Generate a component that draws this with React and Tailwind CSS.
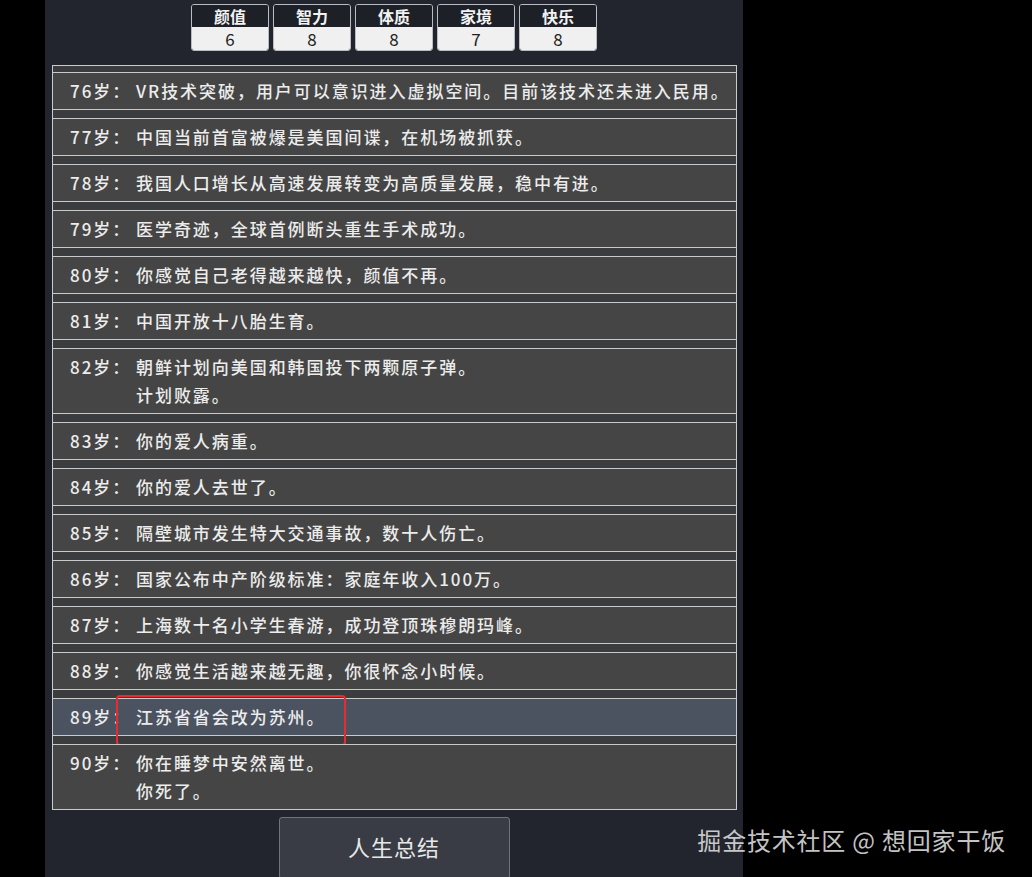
import React from 'react';

const stats = [
  { label: '颜值', value: 6 },
  { label: '智力', value: 8 },
  { label: '体质', value: 8 },
  { label: '家境', value: 7 },
  { label: '快乐', value: 8 },
];

const events = [
  { age: 76, lines: ['VR技术突破，用户可以意识进入虚拟空间。目前该技术还未进入民用。'] },
  { age: 77, lines: ['中国当前首富被爆是美国间谍，在机场被抓获。'] },
  { age: 78, lines: ['我国人口增长从高速发展转变为高质量发展，稳中有进。'] },
  { age: 79, lines: ['医学奇迹，全球首例断头重生手术成功。'] },
  { age: 80, lines: ['你感觉自己老得越来越快，颜值不再。'] },
  { age: 81, lines: ['中国开放十八胎生育。'] },
  { age: 82, lines: ['朝鲜计划向美国和韩国投下两颗原子弹。', '计划败露。'] },
  { age: 83, lines: ['你的爱人病重。'] },
  { age: 84, lines: ['你的爱人去世了。'] },
  { age: 85, lines: ['隔壁城市发生特大交通事故，数十人伤亡。'] },
  { age: 86, lines: ['国家公布中产阶级标准：家庭年收入100万。'] },
  { age: 87, lines: ['上海数十名小学生春游，成功登顶珠穆朗玛峰。'] },
  { age: 88, lines: ['你感觉生活越来越无趣，你很怀念小时候。'] },
  { age: 89, lines: ['江苏省省会改为苏州。'], marked: true },
  { age: 90, lines: ['你在睡梦中安然离世。', '你死了。'] },
];

function StatBox({ label, value }) {
  return (
    <div className="w-[78px] h-[47px] flex flex-col border border-[#b9bcc2] rounded-[3px] overflow-hidden">
      <div className="h-[22px] bg-[#1d2027] text-[#f2f2f2] text-[16px] font-semibold leading-[22px] text-center">
        {label}
      </div>
      <div className="h-[23px] bg-[#f0f0f0] text-[#222] text-[17px] leading-[23px] text-center">
        {value}
      </div>
    </div>
  );
}

function EventRow({ age, lines, marked }) {
  return (
    <li
      className={
        'relative flex border-y border-[#c9cacc] pl-[17px] py-[4px] ' +
        (marked ? 'bg-[#4b5361]' : 'bg-[#454545]')
      }
    >
      <div className="w-[66px] shrink-0 leading-[28px]">{age}岁：</div>
      <div className="flex flex-col">
        {lines.map((l, i) => (
          <div key={i} className="leading-[28px]">
            {l}
          </div>
        ))}
      </div>
      {marked && (
        <div className="absolute left-[63px] top-[-4px] w-[230px] h-[51px] border-[2.5px] border-[#ea2a2e] rounded-[4px]" />
      )}
    </li>
  );
}

export default function App() {
  return (
    <div className="relative w-full h-[877px] bg-black flex overflow-hidden font-['Noto_Sans_CJK_SC','Noto_Sans',sans-serif]">
      <div className="ml-[45px] w-[698px] h-full bg-[#22252d] flex flex-col items-center pt-[4px]">
        <div className="flex gap-[4px]">
          {stats.map((s) => (
            <StatBox key={s.label} {...s} />
          ))}
        </div>

        <ul className="mt-[14px] w-[685px] ml-[1px] h-[745px] shrink-0 overflow-hidden border border-[#c9cacc] bg-[#3b3c3e] pt-[6px] flex flex-col gap-[8px] text-[17px] tracking-[1.95px] text-[#ececec] font-medium">
          {events.map((e) => (
            <EventRow key={e.age} {...e} />
          ))}
        </ul>

        <button className="mt-[7px] w-[231px] h-[62px] shrink-0 bg-[#393c44] border border-[#70737a] rounded-[3px] text-[22px] leading-[30px] pb-[5px] text-[#e8e8e8] tracking-[1px]">
          人生总结
        </button>
      </div>

      <div className="absolute right-[26px] top-[822px] text-[24px] text-[#d9d9d9] opacity-90 tracking-[0.8px]">
        掘金技术社区 @ 想回家干饭
      </div>
    </div>
  );
}
